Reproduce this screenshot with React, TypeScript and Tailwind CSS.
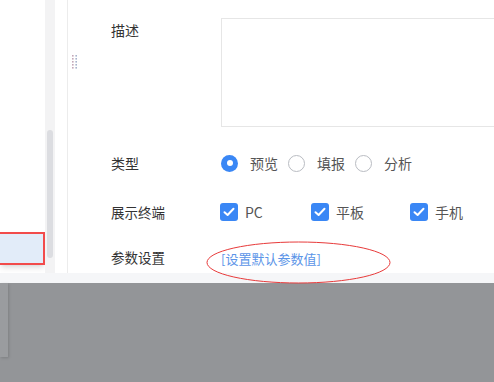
import React from 'react';

const font = { fontFamily: '"Noto Sans CJK SC", "Noto Sans", sans-serif' };

function Radio({ checked, label }: { checked?: boolean; label: string }) {
    return (
        <label className="flex items-center gap-[12px] mr-[10px]">
            {checked ? (
                <span className="w-[17px] h-[17px] rounded-full bg-[#3a87f5] flex items-center justify-center">
                    <span className="w-[6px] h-[6px] rounded-full bg-white" />
                </span>
            ) : (
                <span className="w-[17px] h-[17px] rounded-full border border-[#b9bcc2] bg-white" />
            )}
            <span className="text-[14px] leading-[20px] text-[#555]">{label}</span>
        </label>
    );
}

function Check({ label, width }: { label: string; width: string }) {
    return (
        <label className={`flex items-center gap-[7px] ${width}`}>
            <span className="w-[18px] h-[18px] rounded-[3px] bg-[#3a87f5] flex items-center justify-center">
                <svg width="12" height="10" viewBox="0 0 12 10" fill="none">
                    <path d="M1.5 5.2 L4.6 8 L10.5 1.8" stroke="white" strokeWidth="2" strokeLinecap="round" strokeLinejoin="round" />
                </svg>
            </span>
            <span className="text-[14px] leading-[20px] text-[#555]">{label}</span>
        </label>
    );
}

export default function App() {
    return (
        <div className="w-[494px] h-[382px] overflow-hidden flex flex-col bg-white" style={font}>
            <div className="h-[273px] flex">
                {/* list column */}
                <div className="w-[45px] flex flex-col">
                    <div className="flex-1" />
                    <div className="h-[33px] bg-[#e2ecf9] border-2 border-[#f24b4b] border-l-0 shadow-md mb-[8px]" />
                </div>

                {/* scrollbar */}
                <div className="w-[10px] bg-[#f3f3f4] flex flex-col items-center pt-[130px]">
                    <div className="w-[6px] h-[128px] rounded-full bg-[#dcdde1]" />
                </div>

                <div className="w-[12px]" />
                <div className="w-px bg-[#ececec]" />

                {/* form */}
                <div className="relative flex-1 flex flex-col pt-[18px] pl-[43px]">
                    <svg className="absolute left-[4px] top-[55px]" width="6" height="16" viewBox="0 0 6 16">
                        {[0, 1, 2, 3, 4].map((r) => (
                            <g key={r}>
                                <rect x="0" y={r * 3} width="1.6" height="1.6" fill="#c4a8b8" />
                                <rect x="3.4" y={r * 3} width="1.6" height="1.6" fill="#a8b4cc" />
                            </g>
                        ))}
                    </svg>

                    <div className="flex">
                        <div className="w-[110px] pt-[2px] text-[14px] leading-[20px] text-[#333]">描述</div>
                        <div className="flex-1 h-[109px] border border-[#e6e6e6] border-r-0" />
                    </div>

                    <div className="flex items-center mt-[26px] h-[20px]">
                        <div className="w-[110px] text-[14px] leading-[20px] text-[#333]">类型</div>
                        <Radio checked label="预览" />
                        <Radio label="填报" />
                        <Radio label="分析" />
                    </div>

                    <div className="flex items-center mt-[29px] h-[20px]">
                        <div className="w-[109px] text-[13.5px] leading-[20px] text-[#333]">展示终端</div>
                        <Check label="PC" width="w-[91px]" />
                        <Check label="平板" width="w-[99px]" />
                        <Check label="手机" width="w-[60px]" />
                    </div>

                    <div className="flex items-center mt-[25px] h-[20px]">
                        <div className="w-[110px] text-[13.5px] leading-[20px] text-[#333]">参数设置</div>
                        <a className="text-[13px] leading-[20px] text-[#5b95e8] pt-[4px]">[设置默认参数值]</a>
                    </div>

                    <svg className="absolute left-[138px] top-[241px]" width="185" height="44" viewBox="0 0 185 44">
                        <ellipse cx="92.5" cy="21.5" rx="91.5" ry="20.5" fill="none" stroke="#e83a3a" strokeWidth="1" />
                    </svg>
                </div>
            </div>

            <div className="h-[10px] bg-[#f5f6f8]" />

            <div className="flex-1 bg-[#939598] flex">
                <div className="w-[8px] h-[74px] bg-[#9a9c9f] shadow-[1px_1px_3px_rgba(0,0,0,0.15)]" />
            </div>
        </div>
    );
}
